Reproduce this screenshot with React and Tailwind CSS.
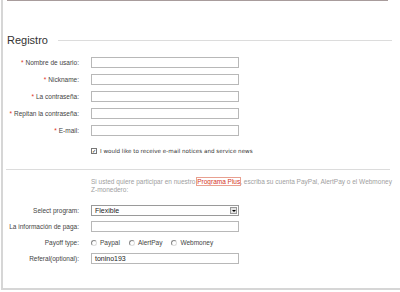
import React from 'react';

const Req = () => <span className="text-[#e0301e] mr-[2px]">*</span>;

const Row = ({ label, required, children }) => (
  <div className="flex items-center h-[11px]">
    <div className="w-[76px] text-right whitespace-nowrap leading-[11px]">
      {required && <Req />}
      {label}
    </div>
    <div className="ml-[12px] w-[148px] h-[11px] flex items-center">{children}</div>
  </div>
);

const Field = ({ value }) => (
  <div className="w-full h-[11px] border border-[#b8b8b8] bg-white text-[#222] pl-[3px] leading-[9px] text-[7px]">
    {value}
  </div>
);

const Radio = ({ label }) => (
  <div className="flex items-center mr-[9px]">
    <span className="w-[6px] h-[6px] rounded-full border border-[#8a8a8a] border-r-[#ddd] border-b-[#ddd] bg-white" />
    <span className="ml-[3px]">{label}</span>
  </div>
);

export default function App() {
  return (
    <div className="w-[400px] h-[292px] bg-white font-['Liberation_Sans',Arial,sans-serif] text-[6.5px] text-[#444]">
      <div className="ml-px h-[290px] border-l-2 border-b-2 border-[#d6d6d6]">
        <div className="ml-[4px] w-[381px] h-px bg-[#a89c9c]" />

        <div className="mt-[32px] flex items-center h-[14px]">
          <div className="pl-[4px] text-[11px] leading-[14px] text-[#333]">Registro</div>
          <div className="flex-1 h-px bg-[#dcdcdc] ml-[10px] mr-[8px]" />
        </div>

        <div className="mt-[10px] flex flex-col gap-[6px]">
          <Row label="Nombre de usario:" required><Field /></Row>
          <Row label="Nickname:" required><Field /></Row>
          <Row label="La contraseña:" required><Field /></Row>
          <Row label="Repitan la contraseña:" required><Field /></Row>
          <Row label="E-mail:" required><Field /></Row>
        </div>

        <div className="mt-[11px] ml-[88px] flex items-center h-[8px]">
          <span className="w-[6px] h-[6px] border border-[#777] bg-white flex items-center justify-center text-[5px] leading-none text-black">
            ✓
          </span>
          <span className="ml-[3px] font-['DejaVu_Sans',Verdana,sans-serif] text-[5.6px] text-[#333]">
            I would like to receive e-mail notices and service news
          </span>
        </div>

        <div className="mt-[14px] ml-[3px] mr-[10px] h-px bg-[#dcdcdc]" />

        <div className="mt-[8px] ml-[88px] leading-[8px] text-[#a0a0a0] whitespace-nowrap">
          <div>
            Si usted quiere participar en nuestro{' '}
            <span className="text-[#d4321c] underline outline outline-1 outline-[#e8a090]">Programa Plus</span>, escriba su
            cuenta PayPal, AlertPay o el Webmoney
          </div>
          <div>Z-monedero:</div>
        </div>

        <div className="mt-[11px] flex flex-col gap-[5px]">
          <Row label="Select program:">
            <div className="w-full h-[11px] border border-[#9a9a9a] bg-white flex items-center justify-between">
              <span className="pl-[3px] text-[7px] text-[#222] leading-[9px]">Flexible</span>
              <span className="w-[7px] h-[7px] mr-px bg-[#e4e4e4] border border-[#999] flex items-center justify-center">
                <span className="w-0 h-0 border-l-[2px] border-r-[2px] border-t-[2px] border-l-transparent border-r-transparent border-t-black" />
              </span>
            </div>
          </Row>
          <Row label="La información de paga:"><Field /></Row>
          <Row label="Payoff type:">
            <div className="flex items-center">
              <Radio label="Paypal" />
              <Radio label="AlertPay" />
              <Radio label="Webmoney" />
            </div>
          </Row>
          <Row label="Referal(optional):"><Field value="tonino193" /></Row>
        </div>
      </div>
    </div>
  );
}
